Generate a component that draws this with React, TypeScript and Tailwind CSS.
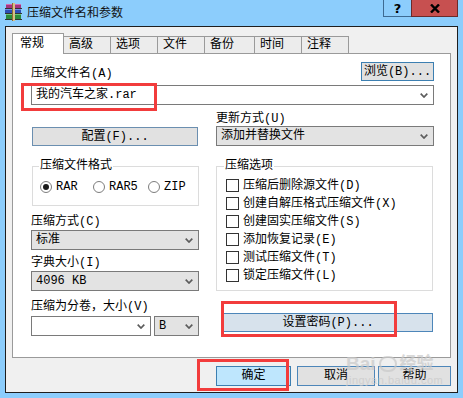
import React from "react";

const mono = "font-['Liberation_Mono','Noto_Sans_CJK_SC',monospace]";

const Chevron = () => (
  <svg width="8" height="5" viewBox="0 0 8 5">
    <path d="M0.7 0.7 L4 4 L7.3 0.7" stroke="#5c5c5c" strokeWidth="1.7" fill="none" />
  </svg>
);

const Select = (props: { text?: string; w: string; white?: boolean }) => {
  return (
    <div
      className={`${props.w} h-[20px] border border-[#7a7a7a] flex items-center justify-between pl-[4px] pr-[5px] ${
        props.white ? "bg-white" : "bg-[#e3e3e3]"
      }`}
    >
      <span className="text-[12px] leading-[14px]">{props.text}</span>
      <Chevron />
    </div>
  );
};

const Btn = (props: { text: string; w: string; h?: string; bg?: string; border?: string }) => {
  return (
    <div
      className={`${props.w} ${props.h || "h-[19px]"} border ${props.border || "border-[#4d86b9]"} ${
        props.bg || "bg-[#e1e1e1]"
      } flex items-center justify-center text-[12px] leading-[14px]`}
    >
      {props.text}
    </div>
  );
};

const Radio = (props: { label: string; checked?: boolean; w: string }) => (
  <div className={`${props.w} flex items-center gap-[4px]`}>
    <div className="w-[12px] h-[12px] rounded-full border border-[#7d7d7d] bg-white flex items-center justify-center">
      {props.checked && <div className="w-[6px] h-[6px] rounded-full bg-[#1a1a1a]" />}
    </div>
    <span className="text-[12px] leading-[14px]">{props.label}</span>
  </div>
);

const Check = (props: { label: string }) => (
  <div className="flex items-center gap-[4px] h-[13px]">
    <div className="w-[13px] h-[13px] border border-[#333333] bg-white" />
    <span className="text-[12px] leading-[14px] whitespace-nowrap">{props.label}</span>
  </div>
);

const RarIcon = () => (
  <svg width="17" height="18" viewBox="0 0 17 18">
    <rect x="1" y="1" width="15" height="5" fill="#a3347f" />
    <rect x="1" y="1" width="15" height="1" fill="#d46bb0" />
    <rect x="0" y="6" width="16" height="5" fill="#2d4fb5" />
    <rect x="0" y="6" width="16" height="1" fill="#6f8fe6" />
    <rect x="1" y="11" width="15" height="6" fill="#2a8a3c" />
    <rect x="1" y="11" width="15" height="1" fill="#6cc47a" />
    <rect x="0" y="5" width="17" height="1" fill="#333" />
    <rect x="0" y="10" width="17" height="1" fill="#333" />
    <rect x="0" y="16" width="17" height="1" fill="#333" />
    <rect x="7" y="0" width="3" height="18" fill="#d8bf86" />
    <rect x="7" y="0" width="1" height="18" fill="#8a6d32" />
  </svg>
);

const tabs = ["高级", "选项", "文件", "备份", "时间", "注释"];

const App = () => {
  return (
    <div className={`w-[463px] h-[398px] bg-[#8ccdfc] relative overflow-hidden text-black ${mono}`}>
      {/* title bar */}
      <div className="h-[26px] flex items-start">
        <div className="ml-[5px] mt-[3px]">
          <RarIcon />
        </div>
        <div className="ml-[5px] mt-[5px] text-[12px] leading-[14px] font-['Noto_Sans_CJK_SC',sans-serif] text-[#111]">
          压缩文件名和参数
        </div>
        <div className="ml-auto mr-[5px] flex h-[17px]">
          <div className="w-[29px] border border-t-0 border-[#3d6a92] flex items-center justify-center text-[13px] font-bold font-['DejaVu_Sans',sans-serif] leading-none">
            ?
          </div>
          <div className="w-[47px] -ml-px bg-[#c75050] border border-t-0 border-[#6b2a2a] flex items-center justify-center">
            <svg width="10" height="9" viewBox="0 0 10 9">
              <path d="M1 0.5 L9 8.5 M9 0.5 L1 8.5" stroke="#000" strokeWidth="2.4" />
            </svg>
          </div>
        </div>
      </div>

      {/* client */}
      <div className="mx-[5px] h-[367px] bg-[#f0f0f0] border border-[#1e1e1e] px-[6px] pt-[6px]">
        {/* tabs */}
        <div className="flex items-end h-[20px]">
          <div className="relative z-10 w-[52px] h-[21px] -mb-px bg-white border border-b-0 border-[#9a9a9a] flex items-center pl-[7px] text-[12px] leading-[14px]">
            常规
          </div>
          {tabs.map((t, i) => (
            <div
              key={t}
              className={`${i === 3 ? "w-[51px]" : "w-[48px]"} -ml-px h-[17px] bg-[#ececec] border border-b-0 border-[#9a9a9a] flex items-center pl-[5px] text-[12px] leading-[14px]`}
            >
              {t}
            </div>
          ))}
        </div>

        {/* tab page */}
        <div className="w-[439px] h-[305px] bg-white border border-[#9a9a9a] pl-[18px] pr-[16px] pt-[8px]">
          <div className="flex justify-between items-end h-[19px]">
            <span className="text-[12px] leading-[14px]">压缩文件名(A)</span>
            <Btn text="浏览(B)..." w="w-[73px]" border="border-[#3c7fb1]" />
          </div>
          <div className="mt-[4px]">
            <Select text="我的汽车之家.rar" w="w-[403px]" white />
          </div>

          <div className="flex gap-[17px]">
            {/* left column */}
            <div className="w-[168px] flex flex-col">
              <div className="mt-[22px] ml-[1px]">
                <Btn text="配置(F)..." w="w-[166px]" border="border-[#6b8fb0]" />
              </div>
              <fieldset className="mt-[13px] ml-[1px] w-[167px] border border-[#dcdcdc]">
                <legend className="ml-[6px] px-[1px] text-[12px] leading-[14px]">压缩文件格式</legend>
                <div className="flex pl-[7px] pt-[7px] pb-[11px]">
                  <Radio label="RAR" checked w="w-[53px]" />
                  <Radio label="RAR5" w="w-[55px]" />
                  <Radio label="ZIP" w="w-[50px]" />
                </div>
              </fieldset>
              <span className="mt-[9px] text-[12px] leading-[14px]">压缩方式(C)</span>
              <div className="mt-[1px]">
                <Select text="标准" w="w-[168px]" />
              </div>
              <span className="mt-[6px] text-[12px] leading-[14px]">字典大小(I)</span>
              <div className="mt-[1px]">
                <Select text="4096 KB" w="w-[168px]" />
              </div>
              <span className="mt-[9px] text-[12px] leading-[14px]">压缩为分卷，大小(V)</span>
              <div className="mt-[2px] flex gap-[3px]">
                <Select w="w-[120px]" white />
                <Select text="B" w="w-[45px]" />
              </div>
            </div>

            {/* right column */}
            <div className="w-[218px] flex flex-col">
              <span className="mt-[7px] text-[12px] leading-[14px]">更新方式(U)</span>
              <Select text="添加并替换文件" w="w-[218px]" />
              <fieldset className="mt-[13px] w-[217px] border border-[#dcdcdc]">
                <legend className="ml-[7px] px-[1px] text-[12px] leading-[14px]">压缩选项</legend>
                <div className="flex flex-col gap-[5px] pl-[9px] pt-[6px] pb-[8px]">
                  <Check label="压缩后删除源文件(D)" />
                  <Check label="创建自解压格式压缩文件(X)" />
                  <Check label="创建固实压缩文件(S)" />
                  <Check label="添加恢复记录(E)" />
                  <Check label="测试压缩文件(T)" />
                  <Check label="锁定压缩文件(L)" />
                </div>
              </fieldset>
              <div className="mt-[22px] ml-[7px]">
                <Btn text="设置密码(P)..." w="w-[210px]" bg="bg-[#d7e2ec]" border="border-[#4d86b9]" />
              </div>
            </div>
          </div>
        </div>

        {/* dialog buttons */}
        <div className="mt-[8px] flex justify-end">
          <Btn text="确定" w="w-[75px]" h="h-[20px]" bg="bg-[#bee6fd]" border="border-[#3c7fb1]" />
          <div className="ml-[6px]">
            <Btn text="取消" w="w-[78px]" h="h-[20px]" />
          </div>
          <div className="ml-[3px]">
            <Btn text="帮助" w="w-[73px]" h="h-[20px]" />
          </div>
        </div>
      </div>

      {/* watermark */}
      <div className="absolute left-[346px] top-[354px] pointer-events-none text-[#c9c9c9] opacity-70 font-['Liberation_Sans','Noto_Sans_CJK_SC',sans-serif]">
        <div className="flex items-center gap-[3px] text-[19px] leading-[20px] font-bold">
          <span>Bai</span>
          <span className="w-[18px] h-[16px] rounded-full border-2 border-[#c9c9c9]" />
          <span className="text-[17px]">经验</span>
        </div>
        <div className="text-[11px] leading-[13px] tracking-[0.5px]">jingyan.baidu.com</div>
      </div>

      {/* red annotations */}
      <div className="absolute left-[21px] top-[83px] w-[136px] h-[28px] border-[3px] border-[#f23c3c]" />
      <div className="absolute left-[221px] top-[301px] w-[176px] h-[36px] border-[3px] border-[#f23c3c]" />
      <div className="absolute left-[197px] top-[359px] w-[92px] h-[32px] border-[3px] border-[#f23c3c]" />
    </div>
  );
};

export default App;
